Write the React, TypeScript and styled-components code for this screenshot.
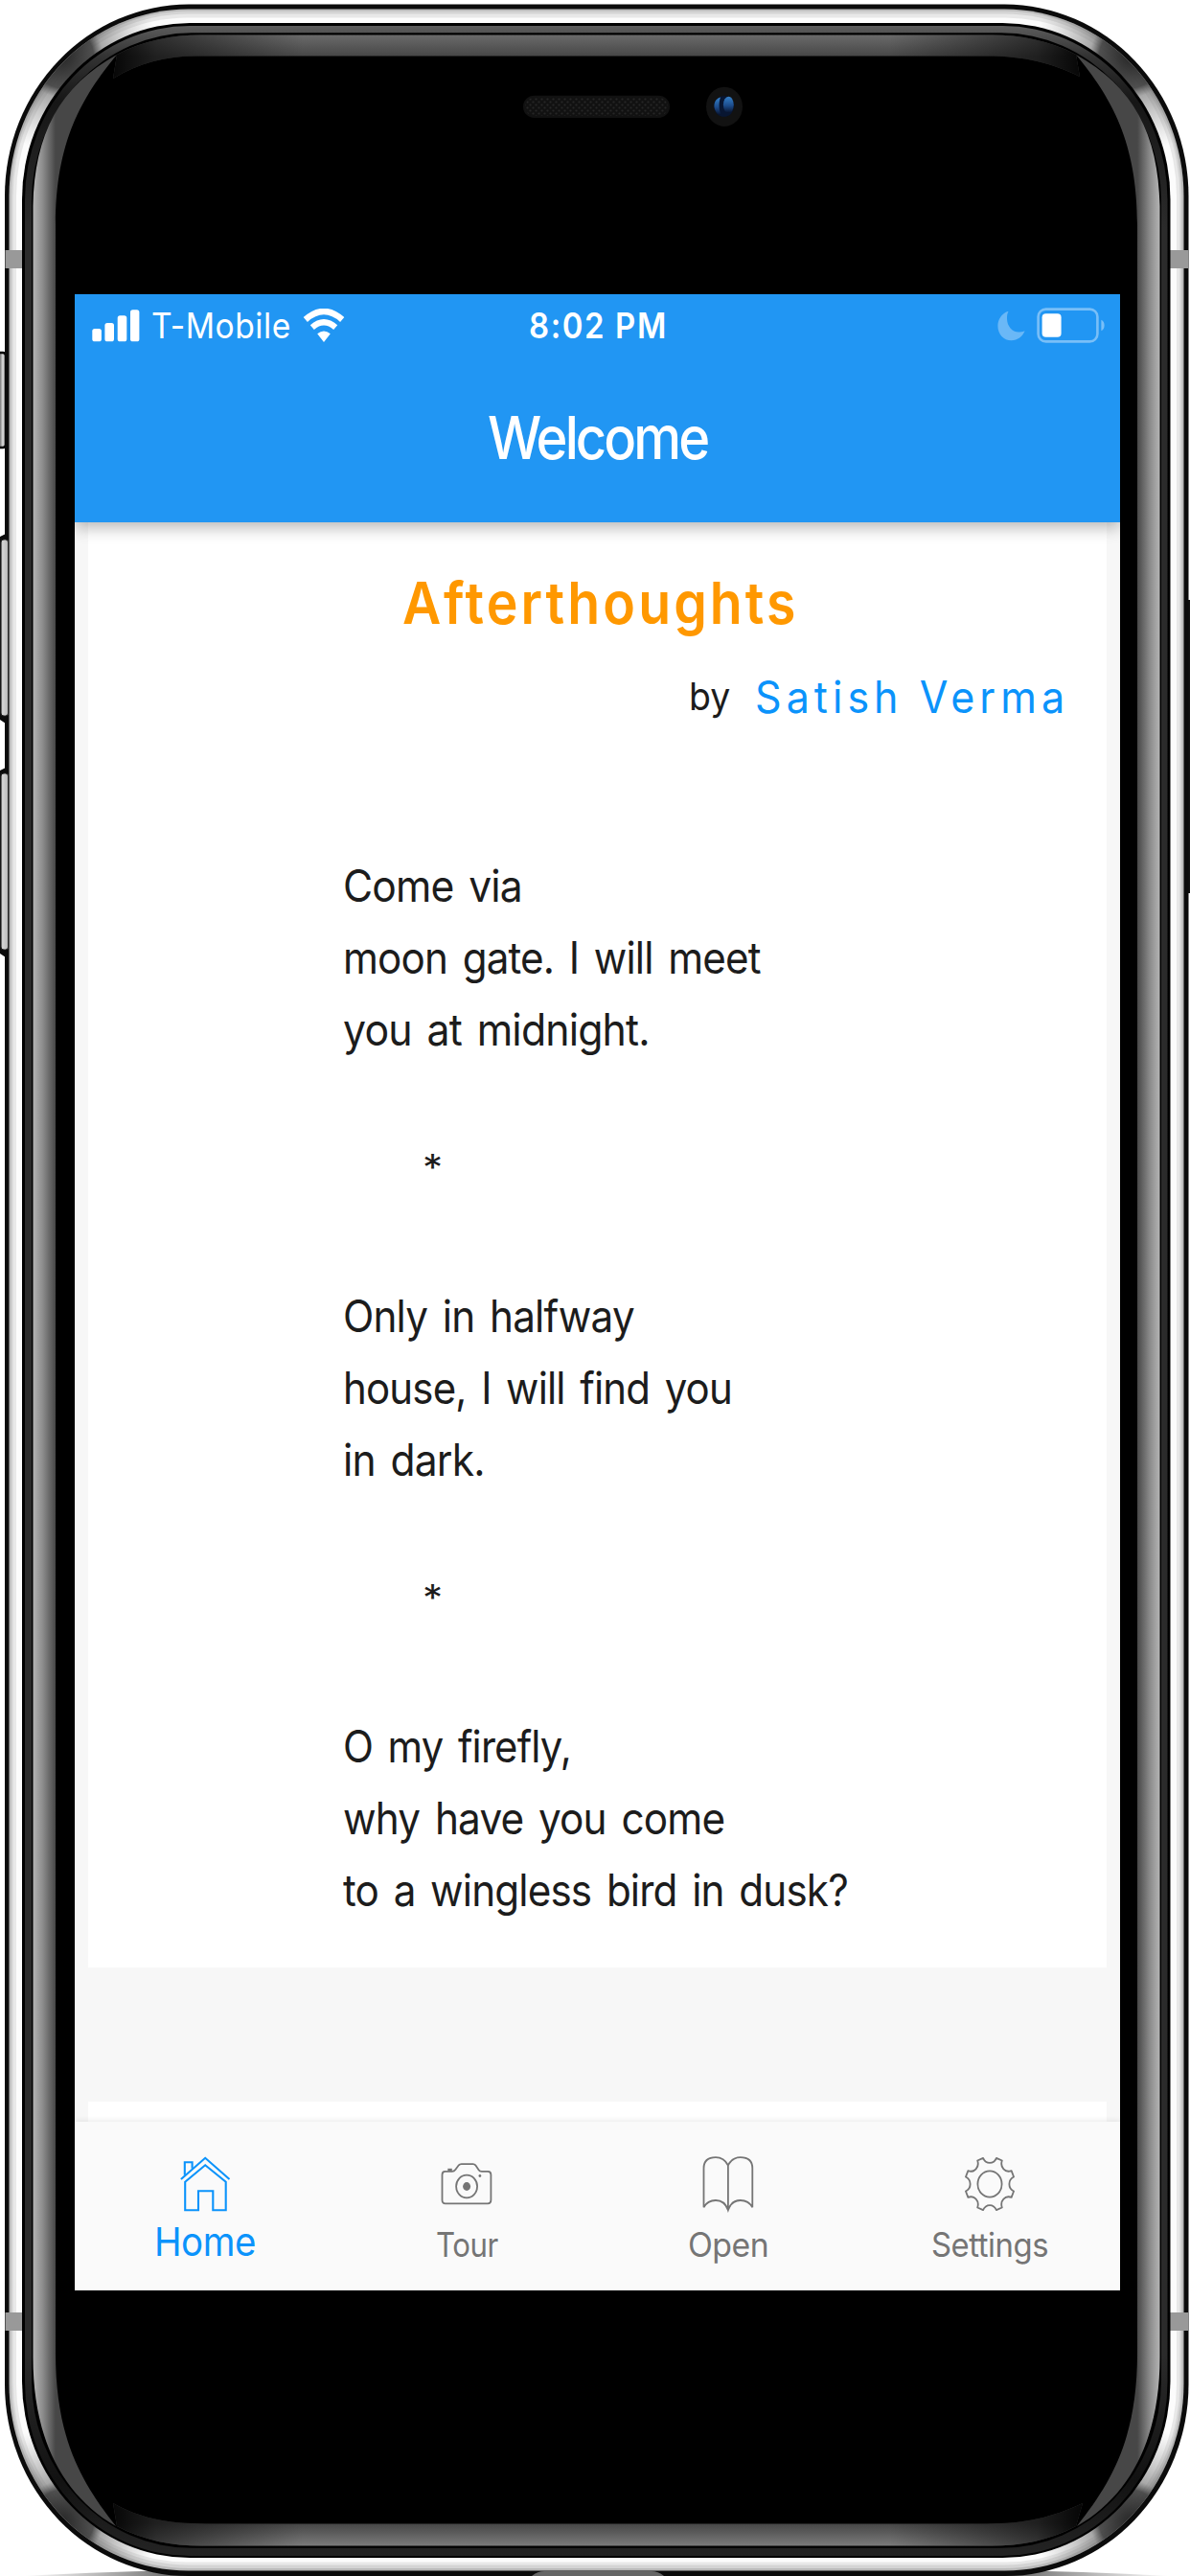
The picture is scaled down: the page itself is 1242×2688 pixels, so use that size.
import React, { useLayoutEffect, useRef, useState } from "react";
import styled, { createGlobalStyle } from "styled-components";

const GlobalStyle = createGlobalStyle`
  *, *::before, *::after { box-sizing: border-box; }
  body {
    margin: 0;
    background: #fff;
    overflow: hidden;
    font-family: Inter, "Liberation Sans", sans-serif;
  }
`;

const Stage = styled.div`
  position: relative;
  display: flex;
  width: 1242px;
  height: 2688px;
  padding: 307.4px 73px 0 78px;
  overflow: hidden;
`;

const Bezel = styled.svg`
  position: absolute;
  inset: 0;
  z-index: -1;
`;

const Screen = styled.main`
  display: flex;
  flex-direction: column;
  width: 1091px;
  height: 2082.3px;
  background: #f7f7f7;
  overflow: hidden;
`;

const AppBar = styled.header`
  position: relative;
  z-index: 1;
  flex: none;
  height: 237.4px;
  background: #2196f3;
  color: #fff;
  box-shadow: 0 5px 16px rgba(0, 0, 0, 0.3);
`;

const StatusBar = styled.div`
  display: grid;
  grid-template-columns: 1fr auto 1fr;
  align-items: center;
  height: 64.4px;
  padding: 0 16px 0 18px;
`;

const StatusGroup = styled.div<{ $end?: boolean }>`
  display: flex;
  align-items: center;
  justify-content: ${(p) => (p.$end ? "flex-end" : "flex-start")};
  gap: 12px;
`;

const NavTitle = styled.div`
  display: flex;
  align-items: center;
  justify-content: center;
  height: 170px;
`;

const Content = styled.section`
  display: flex;
  flex: 1;
  flex-direction: column;
  gap: 140.4px;
  padding: 0 14px;
  min-height: 0;
  overflow: hidden;
`;

const Card = styled.article`
  flex: none;
  height: 1507.9px;
  background: #fff;
`;

const NextCard = styled(Card)`
  height: 60px;
`;

const PoemTitle = styled.h1`
  display: flex;
  justify-content: center;
  margin: 0;
  padding: 44px 0 0 7px;
`;

const Byline = styled.div`
  display: flex;
  align-items: center;
  justify-content: flex-end;
  gap: 26px;
  height: 60px;
  margin-top: 28px;
  padding-right: 39px;
`;

const Poem = styled.div`
  display: flex;
  flex-direction: column;
  margin-top: 130.5px;
  padding-left: 266px;
`;

const PoemLine = styled.div`
  height: 74.85px;
`;

const Divider = styled(PoemLine)`
  margin-top: -6px;
  margin-bottom: 6px;
  padding-left: 83px;
`;

const TabBar = styled.nav`
  position: relative;
  z-index: 1;
  display: grid;
  grid-template-columns: repeat(4, 1fr);
  flex: none;
  height: 175.3px;
  background: #fafafa;
  box-shadow: 0 -2px 5px rgba(0, 0, 0, 0.07);
`;

const Tab = styled.div<{ $active?: boolean }>`
  display: flex;
  flex-direction: column;
  align-items: center;
  padding-top: 36px;
  color: ${(p) => (p.$active ? "#0b93fb" : "#757575")};
  svg {
    display: block;
    height: 60px;
    overflow: visible;
    fill: none;
    stroke: currentColor;
    stroke-width: ${(p) => (p.$active ? 2.1 : 1.8)};
  }
`;

const TabLabel = styled.div<{ $active?: boolean }>`
  margin-top: ${(p) => (p.$active ? 4 : 7)}px;
`;

type Face = {
  $size: number;
  $line: number;
  $weight?: number;
  $color?: string;
  $tracking?: number;
  $words?: number;
};

const FitBox = styled.div<{ $width: number; $line: number }>`
  width: ${(p) => p.$width}px;
  height: ${(p) => p.$line}px;
  white-space: nowrap;
`;

const FitText = styled.span<Face>`
  display: inline-block;
  vertical-align: top;
  transform-origin: 0 50%;
  white-space: nowrap;
  font-size: ${(p) => p.$size}px;
  line-height: ${(p) => p.$line}px;
  font-weight: ${(p) => p.$weight ?? 375};
  color: ${(p) => p.$color ?? "inherit"};
  letter-spacing: ${(p) => p.$tracking ?? 0}px;
  word-spacing: ${(p) => p.$words ?? 0}px;
`;

/* A single line of text condensed horizontally to an exact width. */
function Condensed({ width, children, ...face }: Face & { width: number; children: string }) {
  const ref = useRef<HTMLSpanElement>(null);
  const [scale, setScale] = useState(0.85);
  useLayoutEffect(() => {
    const natural = ref.current?.offsetWidth;
    if (natural) setScale(width / natural);
  }, [width, children]);
  return (
    <FitBox $width={width} $line={face.$line}>
      <FitText ref={ref} {...face} style={{ transform: `scaleX(${scale})` }}>
        {children}
      </FitText>
    </FitBox>
  );
}

const Signal = () => (
  <svg width="50" height="36" viewBox="0 0 50 36" fill="#fff">
    <rect x="0.3" y="21" width="9.6" height="13.3" rx="2.6" />
    <rect x="13.4" y="15" width="9.6" height="19.3" rx="2.6" />
    <rect x="26.7" y="7.3" width="9.6" height="27" rx="2.6" />
    <rect x="40" y="1.2" width="9.4" height="33.1" rx="2.6" />
  </svg>
);

const Wifi = () => (
  <svg width="44" height="36" viewBox="0 0 44 36">
    <path d="M2.8 11.5 Q22 -5.5 41.2 11.5" fill="none" stroke="#fff" strokeWidth="6.4" />
    <path d="M9.8 19.6 Q22 9 34.2 19.6" fill="none" stroke="#fff" strokeWidth="6.2" />
    <path d="M15.2 26.2 Q22 21 28.8 26.2 L22 34.9 Z" fill="#fff" />
  </svg>
);

const Moon = () => (
  <svg width="29" height="32" viewBox="0 0 29 32">
    <path
      d="M10.5 1 C4.4 3.6 0.4 9.3 0.4 15.9 C0.4 24.6 6.6 31.3 14.6 31.3 C21 31.3 26.4 27 28.6 21.3 C25.9 22.4 24 22.6 22.2 22.6 C15.5 22.6 10 16.4 10 8.6 C10 5.7 10.2 3.4 11.5 1.3 Z"
      fill="#6ab8f7"
    />
  </svg>
);

const Battery = () => (
  <svg width="71" height="37" viewBox="0 0 71 37">
    <rect x="1.6" y="1.6" width="61.8" height="33.8" rx="8" fill="none" stroke="#79bff8" strokeWidth="2.6" />
    <rect x="5.6" y="6.3" width="20" height="24.4" rx="4" fill="#fff" />
    <path d="M67.4 12.8 q3.2 1.4 3.2 5.7 q0 4.3 -3.2 5.7 z" fill="#79bff8" />
  </svg>
);

const HomeIcon = () => (
  <svg width="52" height="60" viewBox="0 0 52 60">
    <path d="M0.9 24 L26.2 1.8 L51.5 24" />
    <path d="M5.2 26.7 L26.2 9.3 L47.7 26.7 V56.3 H34.3 V36.3 H19 V56.3 H5.2 Z" />
    <path d="M4.8 19.8 V6.3 H12.6 V12.8" />
  </svg>
);

const CameraIcon = () => (
  <svg width="54" height="60" viewBox="0 -6.8 54 60">
    <path d="M4.5 9 H11.8 Q14 9 15.3 7.2 L18.8 2.5 Q19.8 1.3 21.6 1.3 H33.6 Q35.3 1.3 36.3 2.5 L39.6 7.4 Q40.6 9 42.8 9 H49.2 Q52.4 9 52.4 12.4 V39 Q52.4 42.5 49.2 42.5 H4.7 Q1.5 42.5 1.5 39 V12.4 Q1.5 9 4.5 9 Z" />
    <ellipse cx="27.1" cy="24.7" rx="11" ry="11.9" />
    <ellipse cx="27.1" cy="24.7" rx="4" ry="4.4" fill="currentColor" stroke="none" />
    <circle cx="40.9" cy="13.7" r="1.4" fill="currentColor" stroke="none" />
    <path d="M7.3 7.2 H11.8" strokeWidth="2.4" />
  </svg>
);

const BookIcon = () => (
  <svg width="54" height="60" viewBox="0 0 54 60">
    <path d="M26.9 9.5 V56.2 M26.9 9.5 C24 3.8 19.5 1.2 14 1.2 C6 1.2 1.5 5 1.5 12.5 V53.3 C4.2 48.3 8.5 46 14 46 C20 46 24.6 49.5 26.9 56.2 C29.2 49.5 33.8 46 39.8 46 C45.3 46 49.6 48.3 52.3 53.3 V12.5 C52.3 5 47.8 1.2 39.8 1.2 C34.3 1.2 29.8 3.8 26.9 9.5" />
  </svg>
);

/* Eight-toothed cog: short straight teeth joined by rounded notches. */
const gearPath = (() => {
  const at = (deg: number, r: number) => {
    const a = ((deg - 90) * Math.PI) / 180;
    return `${(27 + 26 * r * Math.cos(a)).toFixed(2)} ${(29 + 28.2 * r * Math.sin(a)).toFixed(2)}`;
  };
  let d = `M${at(-15.5, 1)}`;
  for (let k = 0; k < 8; k++) {
    const c = k * 45;
    d += ` C${at(c - 12, 0.74)} ${at(c + 12, 0.74)} ${at(c + 15.5, 1)} L${at(c + 29.5, 1)}`;
  }
  return d + "Z";
})();

const GearIcon = () => (
  <svg width="54" height="60" viewBox="0 0 54 60">
    <path d={gearPath} strokeLinejoin="round" />
    <ellipse cx="27" cy="29" rx="12.6" ry="13.6" />
  </svg>
);

const GLOSS_SIDE =
  "M34.5 215 C36 140 62 90 122 57 C85 102 58 148 58 235 V2455 C58 2545 85 2590 121 2636 C62 2602 34.5 2540 34.5 2460 Z";
const GLOSS_TOP =
  "M122 57 C150 42 180 36.5 210 36.5 H1035 C1065 36.5 1095 42 1123 57 L1127 80 C1098 66 1070 58.6 1030 58.6 H205 C172 58.6 145 66 118 82 Z";
const GLOSS_BOTTOM =
  "M122 2636 C150 2651 180 2656.5 210 2656.5 H1035 C1065 2656.5 1095 2651 1123 2636 L1130 2612 C1098 2627 1070 2633.4 1030 2633.4 H215 C172 2633.4 145 2627 118 2612 Z";

function PhoneBezel() {
  return (
    <Bezel width="1242" height="2688" viewBox="0 0 1242 2688">
      <defs>
        <linearGradient id="side" x1="34.5" x2="58" y1="0" y2="0" gradientUnits="userSpaceOnUse">
          <stop offset="0" stopColor="#b4b4b4" />
          <stop offset="0.45" stopColor="#8a8a8a" />
          <stop offset="1" stopColor="#474747" />
        </linearGradient>
        <linearGradient id="top" x1="0" x2="0" y1="36" y2="59" gradientUnits="userSpaceOnUse">
          <stop offset="0" stopColor="#6b6b6b" />
          <stop offset="1" stopColor="#464646" />
        </linearGradient>
        <linearGradient id="bottom" x1="0" x2="0" y1="2633" y2="2657" gradientUnits="userSpaceOnUse">
          <stop offset="0" stopColor="#454545" />
          <stop offset="1" stopColor="#7c7c7c" />
        </linearGradient>
        <linearGradient id="fade" x1="112" x2="1133" y1="0" y2="0" gradientUnits="userSpaceOnUse">
          <stop offset="0" stopColor="#000" stopOpacity="0.95" />
          <stop offset="0.05" stopColor="#000" stopOpacity="0.55" />
          <stop offset="0.2" stopColor="#000" stopOpacity="0" />
          <stop offset="0.8" stopColor="#000" stopOpacity="0" />
          <stop offset="0.95" stopColor="#000" stopOpacity="0.55" />
          <stop offset="1" stopColor="#000" stopOpacity="0.95" />
        </linearGradient>
        <radialGradient id="corner">
          <stop offset="0" stopColor="#2a2a2a" />
          <stop offset="0.32" stopColor="#3c3c3c" stopOpacity="0.9" />
          <stop offset="0.42" stopColor="#666" stopOpacity="0.55" />
          <stop offset="1" stopColor="#888" stopOpacity="0" />
        </radialGradient>
        <linearGradient id="rim" x1="0" x2="0" y1="27" y2="2667" gradientUnits="userSpaceOnUse">
          <stop offset="0" stopColor="#5c5c5c" />
          <stop offset="0.012" stopColor="#333" />
          <stop offset="0.03" stopColor="#161616" />
          <stop offset="0.08" stopColor="#2b2b2b" />
          <stop offset="0.92" stopColor="#2b2b2b" />
          <stop offset="0.97" stopColor="#121212" />
          <stop offset="1" stopColor="#242424" />
        </linearGradient>
        <linearGradient id="button" x1="0" x2="9" y1="0" y2="0" gradientUnits="userSpaceOnUse">
          <stop offset="0" stopColor="#777" />
          <stop offset="0.3" stopColor="#d6d6d6" />
          <stop offset="1" stopColor="#b4b4b4" />
        </linearGradient>
        <linearGradient id="ground" x1="20" x2="1225" y1="0" y2="0" gradientUnits="userSpaceOnUse">
          <stop offset="0" stopColor="#777" stopOpacity="0" />
          <stop offset="0.14" stopColor="#666" />
          <stop offset="0.86" stopColor="#666" />
          <stop offset="1" stopColor="#777" stopOpacity="0" />
        </linearGradient>
        <linearGradient id="lens" x1="0" x2="0" y1="0" y2="1">
          <stop offset="0" stopColor="#3580c8" />
          <stop offset="0.55" stopColor="#1c4c8c" />
          <stop offset="1" stopColor="#08122b" />
        </linearGradient>
        <pattern id="mesh" width="6" height="6" patternUnits="userSpaceOnUse">
          <circle cx="1.5" cy="1.5" r="1.1" fill="#262626" />
          <circle cx="4.5" cy="4.5" r="1.1" fill="#262626" />
        </pattern>
        <clipPath id="silver">
          <rect x="9.5" y="9.5" width="1226" height="2673" rx="187" ry="195" />
        </clipPath>
      </defs>

      <path d="M25 2688 Q120 2683 200 2682 H1040 Q1130 2683 1220 2688 Z" fill="url(#ground)" />

      <rect x="-6" y="368" width="12" height="99" rx="3" fill="url(#button)" stroke="#000" strokeWidth="2.6" />
      <rect x="1238" y="626" width="5" height="306" fill="#111" />

      <rect x="5" y="4.6" width="1235.5" height="2683.4" rx="192" ry="200" fill="#0b0b0b" />
      <rect x="9.5" y="9.5" width="1226" height="2673" rx="187" ry="195" fill="#b9b9b9" />
      <rect x="11.5" y="11.5" width="1222" height="2668.5" rx="185" ry="193" fill="#d4d4d4" />
      <rect x="13.5" y="14.5" width="1218" height="2662" rx="183" ry="190" fill="#e8e8e8" />
      <rect x="17" y="18.5" width="1211" height="2655" rx="179" ry="186" fill="#fcfcfc" />
      <g clipPath="url(#silver)">
        <circle cx="66" cy="60" r="100" fill="url(#corner)" />
        <circle cx="1179" cy="60" r="100" fill="url(#corner)" />
        <circle cx="66" cy="2630" r="100" fill="url(#corner)" />
        <circle cx="1179" cy="2630" r="100" fill="url(#corner)" />
      </g>
      {[261, 2413].map((y) => (
        <g key={y} fill="#999">
          <rect x="5.5" y={y} width="19" height="19" />
          <rect x="1220.5" y={y} width="19.5" height="19" />
        </g>
      ))}
      {[563, 807].map((y) => (
        <g key={y}>
          <path d={`M0 ${y - 3} L6 ${y - 6} V${y + 192} L0 ${y + 188} Z`} fill="#0b0b0b" />
          <rect x="1" y={y} width="7.6" height="184" rx="3" fill="url(#button)" stroke="#222" strokeWidth="1" />
        </g>
      ))}

      <rect x="23" y="24" width="1198.5" height="2645" rx="175" ry="184" fill="#000" />
      <rect x="26" y="27" width="1192.5" height="2640" rx="172" ry="181" fill="url(#rim)" />
      <rect x="33" y="34.3" width="1179" height="2624.5" rx="167" ry="176" fill="#000" />
      <path d={GLOSS_TOP} fill="url(#top)" />
      <path d={GLOSS_TOP} fill="url(#fade)" />
      <path d={GLOSS_BOTTOM} fill="url(#bottom)" />
      <path d={GLOSS_BOTTOM} fill="url(#fade)" />
      <path d={GLOSS_SIDE} fill="url(#side)" />
      <path d={GLOSS_SIDE} fill="url(#side)" transform="translate(1245 0) scale(-1 1)" />
      <path d="M555 2688 Q561 2683 568 2683 H680 Q687 2683 693 2688 Z" fill="#666" />

      <rect x="546" y="99.7" width="153" height="23.3" rx="11.6" fill="#111" />
      <rect x="548" y="101.7" width="149" height="19.3" rx="9.6" fill="url(#mesh)" />
      <ellipse cx="756" cy="111.3" rx="19" ry="20.6" fill="#121212" />
      <ellipse cx="755.6" cy="111" rx="10.4" ry="10.8" fill="#081632" />
      <path d="M752 101.5 C746 103 744.5 109 746 114 Q748.5 120 752.5 120 C750 113 750 107 752 101.5 Z" fill="url(#lens)" />
      <ellipse cx="760.3" cy="109.3" rx="5.4" ry="8.6" fill="url(#lens)" />
    </Bezel>
  );
}

const poem: [string, number][] = [
  ["Come via", 187],
  ["moon gate. I will meet", 436],
  ["you at midnight.", 320],
  ["", 0],
  ["*", 21],
  ["", 0],
  ["Only in halfway", 304],
  ["house, I will find you", 406],
  ["in dark.", 148],
  ["", 0],
  ["*", 21],
  ["", 0],
  ["O my firefly,", 238],
  ["why have you come", 398],
  ["to a wingless bird in dusk?", 527],
];

const tabs = [
  { label: "Home", width: 106, Icon: HomeIcon, active: true },
  { label: "Tour", width: 65, Icon: CameraIcon },
  { label: "Open", width: 84, Icon: BookIcon },
  { label: "Settings", width: 122, Icon: GearIcon },
];

export default function App() {
  return (
    <>
      <GlobalStyle />
      <Stage>
        <PhoneBezel />
        <Screen>
          <AppBar>
            <StatusBar>
              <StatusGroup>
                <Signal />
                <Condensed width={146} $size={37} $line={44} $weight={400} $tracking={0.6}>
                  T-Mobile
                </Condensed>
                <Wifi />
              </StatusGroup>
              <Condensed width={145} $size={37} $line={44} $weight={570} $tracking={1.8}>
                8:02 PM
              </Condensed>
              <StatusGroup $end>
                <Moon />
                <Battery />
              </StatusGroup>
            </StatusBar>
            <NavTitle>
              <Condensed width={229} $size={62} $line={76} $weight={550} $tracking={-3.2}>
                Welcome
              </Condensed>
            </NavTitle>
          </AppBar>
          <Content>
            <Card>
              <PoemTitle>
                <Condensed width={414} $size={61} $line={80} $weight={580} $tracking={3.4} $color="#ff9800">
                  Afterthoughts
                </Condensed>
              </PoemTitle>
              <Byline>
                <Condensed width={43} $size={40} $line={60} $color="#1c1c1c">
                  by
                </Condensed>
                <Condensed width={328} $size={46} $line={60} $tracking={5.4} $color="#0b93fb">
                  Satish Verma
                </Condensed>
              </Byline>
              <Poem>
                {poem.map(([text, width], i) => {
                  const star = text === "*";
                  const Line = star ? Divider : PoemLine;
                  return (
                    <Line key={i}>
                      {text && (
                        <Condensed
                          width={width}
                          $size={star ? 38 : 46}
                          $line={74.85}
                          $tracking={star ? 0 : -0.9}
                          $words={5}
                          $color="#1c1c1c"
                        >
                          {text}
                        </Condensed>
                      )}
                    </Line>
                  );
                })}
              </Poem>
            </Card>
            <NextCard />
          </Content>
          <TabBar>
            {tabs.map(({ label, width, Icon, active }) => (
              <Tab key={label} $active={active}>
                <Icon />
                <TabLabel $active={active}>
                  <Condensed width={width} $size={active ? 41 : 35} $line={50} $tracking={-0.5}>
                    {label}
                  </Condensed>
                </TabLabel>
              </Tab>
            ))}
          </TabBar>
        </Screen>
      </Stage>
    </>
  );
}
